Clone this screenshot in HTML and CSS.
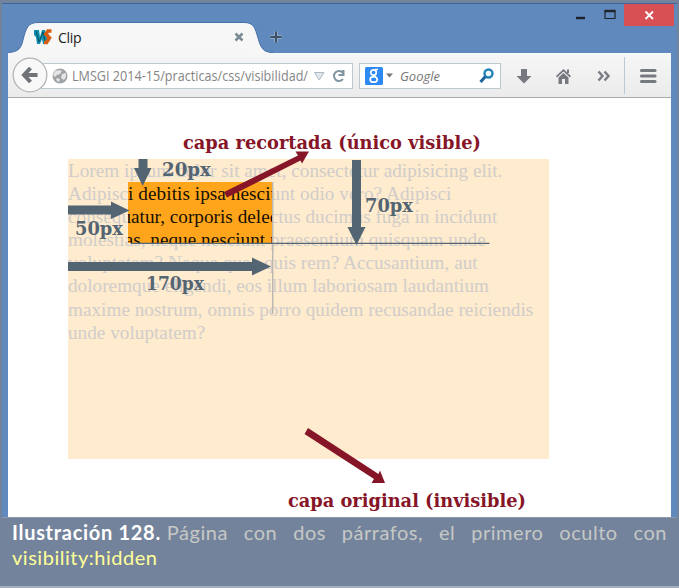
FILE: index.html
```html
<!DOCTYPE html>
<html lang="es">
<head>
<meta charset="utf-8">
<title>Clip</title>
<link rel="stylesheet" href="styles.css">
</head>
<body>
<figure class="figure">
  <div class="window">
    <header class="titlebar">
      <svg class="tabshape" width="265" height="34" viewBox="0 0 265 34">
        <path d="M0 32.5C10 32 13 29 15 20C18 8 20 2.500 30 2.500H236C246 2.500 247 8 250 18C253 29 256 32.500 265 32.500V34H0Z" fill="#f7f7f7" stroke="#4770aa" stroke-width="1"/>
        <path d="M0 33H265V34H0Z" fill="#f7f7f7"/>
      </svg>
      <div class="tab">
        <svg class="favicon" width="19" height="16" viewBox="0 0 19 16">
          <path d="M0 1H5L6 8L8 1H11L12 8L13 4L14 15H9L8 10L6 15H3L2 8L0 6Z" fill="#0b8fae"/>
          <path d="M2 2L5 13L9 3L11 13" fill="none" stroke="#075568" stroke-width="1"/>
          <path d="M17.500 2H14L11.800 5L15.500 9L12.500 13.500H10" fill="none" stroke="#d75d13" stroke-width="3.600"/>
        </svg>
        <span class="tabname">Clip</span>
        <svg class="tabclose" width="10" height="10" viewBox="0 0 10 10"><path d="M1.500 1.500L8.500 8.500M8.500 1.500L1.500 8.500" stroke="#7b8b94" stroke-width="2.500"/></svg>
      </div>
      <svg class="newtab" width="12" height="12" viewBox="0 0 12 12"><path d="M6 0.500V11.500M0.500 6H11.500" stroke="#8ba7ca" stroke-width="4"/><path d="M6 0.500V11.500M0.500 6H11.500" stroke="#3d5064" stroke-width="2"/></svg>
      <div class="controls">
        <svg width="98" height="24" viewBox="0 0 98 24">
          <path d="M0 14H9" stroke="#1d222a" stroke-width="2.400"/>
          <path d="M29 7H39V14.500H29Z" fill="none" stroke="#20252d" stroke-width="1.200"/><path d="M28.500 7H39.500" stroke="#20252d" stroke-width="2.500"/>
          <path d="M48 0H98V22H48Z" fill="#d85054"/>
          <path d="M69.500 7.500L77 15M77 7.500L69.500 15" stroke="#fff" stroke-width="1.800"/>
        </svg>
      </div>
    </header>
    <main class="client">
      <nav class="toolbar">
        <div class="urlbar">
          <svg width="16" height="16" viewBox="0 0 16 16"><circle cx="8" cy="8" r="7.500" fill="#a0a3a6"/><path d="M3 3L7 2L10 3L8 6L5 7L3 9L1 7ZM10 6L14 5L14 9L12 12L9 10ZM5 10L8 11L7 14L4 12Z" fill="#e4e5e6"/></svg>
          <svg class="url" width="240" height="22"><text x="0" y="16" textLength="236" lengthAdjust="spacingAndGlyphs">LMSGI 2014-15/practicas/css/visibilidad/</text></svg>
          <svg class="urltools" width="34" height="16" viewBox="0 0 34 16"><path d="M1.500 4.500H11L6.300 12Z" fill="#e1e8ed" stroke="#aebac3"/><path d="M30 5A5 5 0 1 0 30 11" fill="none" stroke="#8195a3" stroke-width="2"/><path d="M31.500 2V8H25.500V6H29V2Z" fill="#8195a3"/></svg>
        </div>
        <svg class="back" width="36" height="36" viewBox="0 0 36 36"><circle cx="18" cy="18" r="16.800" fill="#f8f8f8" stroke="#b1b5b9" stroke-width="1.300"/><path d="M18.500 11L12 18L18.500 25M12.500 18H25.500" fill="none" stroke="#6f7378" stroke-width="4"/></svg>
        <div class="search">
          <svg width="18" height="18" viewBox="0 0 18 18"><rect width="18" height="18" rx="1.500" fill="#2d89f3"/><g fill="none" stroke="#fff" stroke-width="1.700"><ellipse cx="8.500" cy="5.500" rx="2.800" ry="2.700"/><ellipse cx="8.700" cy="12.400" rx="3.500" ry="2.800"/><path d="M10 2.500H13M9 8L10 10"/></g></svg>
          <svg class="drop" width="7" height="5" viewBox="0 0 7 5"><path d="M0 0.500H7L3.500 4.500Z" fill="#777"/></svg>
          <span>Google</span>
          <svg class="lens" width="16" height="16" viewBox="0 0 16 16"><circle cx="9.500" cy="5.500" r="4" fill="#f4fbff" stroke="#2382b6" stroke-width="2.400"/><path d="M6.500 8.500L1.500 14" stroke="#1b659d" stroke-width="3"/></svg>
        </div>
        <svg class="tools" width="145" height="38" viewBox="0 0 145 38">
          <g fill="#767a80"><path d="M12 12H18V19H22.500L15 26.500L7.500 19H12Z"/><path d="M47 19L54.500 12L62 19L61 20.500L54.500 14.500L48 20.500Z"/><path d="M49.500 20.500L54.500 16L59.500 20.500V27H56V22H53V27H49.500ZM58 12.500H60V16H58Z"/></g>
          <path d="M89.500 14.500L93.500 19L89.500 23.500M95.500 14.500L99.500 19L95.500 23.500" fill="none" stroke="#7a7e84" stroke-width="2.500"/>
          <path d="M115.500 0V37" stroke="#b9c9d8"/>
          <path d="M132.500 13.500H146M132.500 19H146M132.500 24.500H146" stroke="#767a80" stroke-width="3.200" stroke-linecap="round"/>
        </svg>
      </nav>
      <section class="page">
        <div class="layer">
          <p class="ghost"><span>Lorem ipsum dolor sit amet, consectetur adipisicing elit.</span><span class="wide">Adipisci debitis ipsa nesciunt odio vero? Adipisci</span><span>consequatur, corporis delectus ducimus fuga in incidunt</span><span>molestias, neque nesciunt praesentium quisquam unde</span><span>voluptatem? Neque quae quis rem? Accusantium, aut</span><span>doloremque eligendi, eos illum laboriosam laudantium</span><span>maxime nostrum, omnis porro quidem recusandae reiciendis</span><span>unde voluptatem?</span></p>
          <p class="clipped"><span>Lorem ipsum dolor sit amet, consectetur adipisicing elit.</span><span class="wide">Adipisci debitis ipsa nesciunt odio vero? Adipisci</span><span>consequatur, corporis delectus ducimus fuga in incidunt</span><span>molestias, neque nesciunt praesentium quisquam unde</span></p>
        </div>
        <svg class="notes" width="663" height="418" viewBox="8 98 663 418">
          <path d="M272.700 182V314" stroke="#b9b7b0" stroke-width="1.400"/>
          <path d="M131 243.400H489.500" stroke="#566572" stroke-width="1.200"/>
          <g fill="#536473">
            <path d="M138.500 159H147.500V168H151.500L142.700 186L134 168H138.500Z"/>
            <path d="M68 205.500H111V201.500L129.500 210.500L111 219V214.500H68Z"/>
            <path d="M352 160H361V227H365.500L356.500 245L347.500 227H352Z"/>
            <path d="M68 262H252V257.500L271 266.500L252 275.500V271H68Z"/>
          </g>
          <g fill="#861527">
            <path d="M224 192L298 155.500L295.500 151.500L309 151.500L302 163.500L300.500 160.500L227 197.500Z"/>
            <path d="M308 428L378.500 474L380 470.500L385 483L371.500 483L374 479L304.500 434Z"/>
          </g>
          <g class="dim">
            <text x="162" y="176" textLength="49" lengthAdjust="spacingAndGlyphs">20px</text>
            <text x="75" y="235" textLength="48" lengthAdjust="spacingAndGlyphs">50px</text>
            <text x="365" y="212" textLength="48" lengthAdjust="spacingAndGlyphs">70px</text>
            <text x="146" y="290" textLength="58" lengthAdjust="spacingAndGlyphs">170px</text>
          </g>
          <g class="label">
            <text x="183" y="149" textLength="298" lengthAdjust="spacingAndGlyphs">capa recortada (único visible)</text>
            <text x="288" y="507" textLength="238" lengthAdjust="spacingAndGlyphs">capa original (invisible)</text>
          </g>
        </svg>
      </section>
    </main>
  </div>
  <figcaption class="caption">
    <div class="row"><b>Ilustración 128.</b><span class="spread">Página con dos párrafos, el primero oculto con</span></div>
    <code>visibility:hidden</code>
  </figcaption>
</figure>
</body>
</html>
```

FILE: styles.css
```css
* { box-sizing: border-box; }
body { margin: 0; background: #74839c; }
svg { display: block; flex: none; }
.figure { margin: 0; height: 588px; padding: 3px 2px 0; border-bottom: 2px solid #a5afbf; }
.window { height: 515px; background: #6089be; border-top: 1px solid #3d659d; border-bottom: 1px solid #8c98ac; padding: 0 6px; display: flex; flex-direction: column; }
.titlebar { height: 49px; flex: none; display: flex; position: relative; }
.tabshape { margin-top: 16px; }
.tab { position: absolute; left: 26px; top: 23px; width: 210px; height: 20px; display: flex; align-items: center; }
.tabname { font: 14px "Open Sans", sans-serif; margin-left: 5px; flex: 1; color: #222; letter-spacing: -0.3px; }
.newtab { margin: 27px 0 0 -3px; }
.controls { margin: 0 -3px 0 auto; }
.client { flex: 1; background: #fff; border-top: 1px solid #f9f9f9; min-height: 0; }
.toolbar { height: 44px; background: linear-gradient(#f6f6f6, #ebebeb); border-bottom: 1px solid #aaa; display: flex; align-items: center; position: relative; padding-left: 23px; }
.urlbar { width: 322px; height: 26px; background: #fff; border: 1px solid #bdc8cf; padding-left: 20px; display: flex; align-items: center; }
.url { margin-left: 4px; overflow: visible; }
.url text { font: 14px "Open Sans", sans-serif; fill: #858585; }
.urltools { margin-left: 1px; }
.back { position: absolute; left: 4px; top: 3px; }
.search { width: 142px; height: 26px; background: #fff; border: 1px solid #bdc8cf; margin-left: 6px; padding: 0 5px; display: flex; align-items: center; }
.drop { margin-left: 3px; }
.search span { font: italic 13px "Open Sans", sans-serif; color: #777; margin-left: 7px; flex: 1; }
.tools { margin-left: 8px; overflow: visible; }
.page { position: relative; padding: 61px 0 0 60px; }
.layer { position: relative; width: 481px; height: 300px; background: #ffebcd; }
p { margin: 0; font: 19.2px/23.1px "Liberation Serif", serif; letter-spacing: 0.02px; height: 300px; width: 481px; white-space: nowrap; }
p span { display: block; }
.wide { letter-spacing: 0.06px; }
.ghost { color: #d0cdcb; }
.clipped { position: absolute; left: 0; top: 0; background: #ffa51b; color: #160f04; clip-path: inset(23px 276px 216px 60px); }
.notes { position: absolute; left: 0; top: 0; }
.notes text { font: bold 18px "DejaVu Serif", serif; }
.dim { fill: #536473; }
.label { fill: #861527; }
.caption { padding: 2px 10px 0; font: 20px/25px Lato, sans-serif; letter-spacing: 0.52px; color: #c5c8c5; }
.row { display: flex; }
.row b { color: #fff; margin-right: 6px; white-space: nowrap; letter-spacing: 0.7px; }
.spread { flex: 1; text-align: justify; text-align-last: justify; white-space: nowrap; }
.caption code { font: inherit; color: #ffff99; }
```
